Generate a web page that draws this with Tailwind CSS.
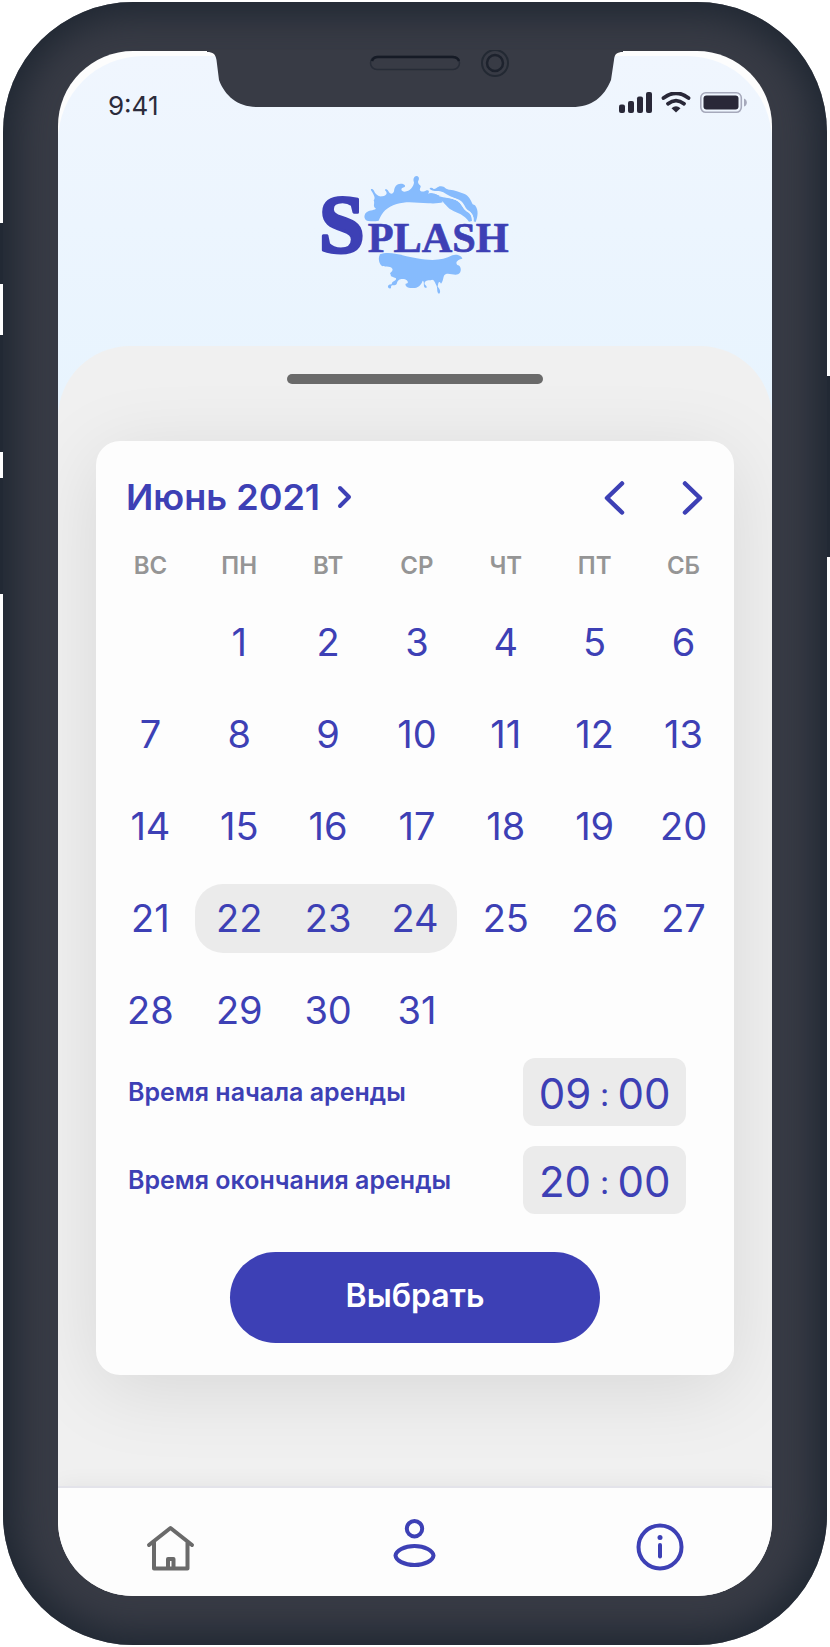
<!DOCTYPE html>
<html lang="ru">
<head>
<meta charset="utf-8">
<meta name="viewport" content="width=device-width, initial-scale=1">
<title>Splash</title>
<script src="https://cdn.jsdelivr.net/npm/@tailwindcss/browser@4"></script>
</head>
<body class="bg-white font-['Inter','Liberation_Sans',sans-serif] text-[#3d40b5]">
<div class="relative px-[3px] py-[2px]">
  <!-- side keys -->
  <div class="absolute left-0 top-[223px] h-[61px] w-1 bg-[#222934]"></div>
  <div class="absolute left-0 top-[335px] h-[117px] w-1 bg-[#222934]"></div>
  <div class="absolute left-0 top-[478px] h-[116px] w-1 bg-[#222934]"></div>
  <div class="absolute right-0 top-[376px] h-[181px] w-1 bg-[#222934]"></div>

  <div class="relative rounded-[130px] bg-[#383b45] px-[55px] py-[49px] shadow-[inset_0_0_36px_12px_#1f2732]">
    <!-- notch -->
    <svg class="absolute left-1/2 top-[48px] z-10 -ml-[208px] h-[60px] w-[416px]" viewBox="207 50 416 60" fill="none" aria-hidden="true">
      <path d="M207 50V52C213 52 215.500 54 216.500 60L219 80C225 96 238 107 257 107H572C592 107 604 97 611 80L614 60C614.500 54 617 52 623 52V50Z" fill="#383b45"/>
      <rect x="370.500" y="56.500" width="89" height="13" rx="6.500" stroke="#272c37" stroke-width="1.500"/>
      <path d="M372 61C373 58 375 57 378 57H452C455 57 458 58 459 61" stroke="#161b26" stroke-width="2.500"/>
      <circle cx="495" cy="63" r="13" stroke="#232933" stroke-width="2"/>
      <circle cx="495" cy="63" r="8" stroke="#1d222d" stroke-width="2.500"/>
    </svg>

    <main class="overflow-hidden rounded-[75px] bg-[#fdfdfd] pt-[5px]">
      <div class="rounded-t-[85px] bg-linear-to-b from-[#f0f6fe] to-[#e8f4fe] to-[340px]">
        <header class="flex flex-col pt-[31px]">
          <div class="flex h-8 items-center justify-between pl-[50px] pr-[24px] text-[#2b2b3b]">
            <span class="pt-1 text-[26px]">9:41</span>
            <svg class="h-[22px] w-[129px]" viewBox="619 92 129 22" fill="#292838" aria-hidden="true">
              <rect x="619" y="104.500" width="6" height="8.500" rx="2"/><rect x="628" y="101" width="6" height="12" rx="2"/><rect x="637" y="96.500" width="6" height="16.500" rx="2"/><rect x="646" y="92" width="6" height="21" rx="2"/>
              <path d="M663.500 98Q676 88.500 688.500 98M668 103.700Q676 97.500 684 103.700" fill="none" stroke="#292838" stroke-width="3.800" stroke-linecap="round"/>
              <path d="M671.500 108.200Q676 104.500 680.500 108.200L676 112.500Z"/>
              <rect x="700.800" y="92.800" width="40.500" height="19.500" rx="5" fill="none" stroke="#a6a9bb" stroke-width="1.600"/>
              <rect x="703.500" y="95.500" width="35" height="14" rx="3"/>
              <path d="M744 98.500Q746.800 99.500 746.800 102.500T744 106.500Z" fill="#a6a9bb"/>
            </svg>
          </div>
          <svg class="mx-auto mt-[41px] mb-[36px] h-[150px] w-[230px]" viewBox="0 0 690 450" role="img" aria-label="Splash">
            <g fill="#86bbfd">
              <path d="M206 183C192 182 190 166 198 158C206 150 220 152 228 146C216 140 226 130 221 121C229 114 218 99 213 91C211 85 218 86 221 91C227 105 236 111 247 109C260 107 264 100 255 91C254 86 262 87 265 93C270 104 279 104 282 94C283 80 290 71 302 71C316 71 318 79 312 82C300 84 303 95 314 95C330 95 341 80 342 67C338 58 342 48 350 48C360 50 357 59 354 65C354 75 366 75 361 83C356 93 365 98 377 92C386 88 390 94 384 101C400 94 424 109 428 127C420 130 404 131 385 130C350 128 320 122 290 132C260 141 246 157 236 182C225 184 216 184 206 183Z"/>
              <path d="M389 87C390 82 397 83 401 87C410 88 413 78 423 79C436 80 436 88 447 89C462 88 477 97 492 101C506 107 512 119 518 133L525 136C537 151 533 171 527 186L520 184C523 168 515 158 501 149C493 138 491 126 477 119C458 113 442 105 430 97C417 89 404 96 394 90Z"/>
              <path d="M402 101C425 110 455 112 475 124C487 134 487 146 501 155C513 161 515 170 516 183L507 185C492 163 473 160 455 150C437 139 429 122 416 113Z"/>
              <path d="M240 283C270 272 310 288 350 295C400 304 430 300 457 286C470 281 486 288 487 296C475 298 464 306 472 315C486 317 485 338 474 343C462 347 448 338 438 342C427 346 433 360 423 371C415 360 415 370 413 380C423 389 421 401 417 401C410 399 413 387 410 378C404 366 401 355 392 361C382 361 372 362 374 373C384 382 380 385 375 383C368 378 375 365 368 362C364 377 350 386 336 384C323 385 314 377 317 371C329 370 323 359 312 357C301 356 293 358 290 372C282 381 276 371 273 380C275 389 262 386 264 378C268 370 275 377 276 368C282 361 289 363 288 355C279 350 271 352 272 343C265 338 281 336 277 326C270 316 251 324 243 316C236 306 234 293 240 283Z"/>
              <path d="M418 107C445 114 458 112 473 121C490 131 486 143 502 152C515 159 520 170 519 185" fill="none" stroke="#edf5fd" stroke-width="4"/>
            </g>
            <g fill="#3d40b5" stroke="#3d40b5" stroke-linejoin="round" class="font-['Liberation_Serif',serif] font-bold">
              <text x="57" y="275" font-size="246" stroke-width="9">S</text>
              <text x="203" y="276" font-size="127" stroke-width="2">PLASH</text>
            </g>
          </svg>
        </header>

        <section class="rounded-t-[72px] bg-[#f0f0f0] px-[38px] pb-[111px] pt-[28px]">
          <div class="mx-auto h-[10px] w-64 rounded-full bg-[#6a6a6a]"></div>
          <div class="mt-[57px] rounded-3xl bg-[#fdfdfd] pb-8 pt-[30px] shadow-[0_14px_80px_rgba(0,0,0,0.1)]">
            <div class="flex h-[52px] items-center pl-[30px] pr-6">
              <button type="button" class="flex items-center gap-[17px] text-[36px] font-semibold">Июнь 2021
                <svg class="h-6 w-4" viewBox="0 0 16 24" fill="none" stroke="currentColor" stroke-width="4" stroke-linecap="round" stroke-linejoin="round" aria-hidden="true"><path d="M3 3L12 12L3 21"/></svg>
              </button>
              <div class="ml-auto flex gap-[42px]">
                <button type="button" aria-label="Предыдущий месяц"><svg class="size-9" viewBox="0 0 36 36" fill="none" stroke="currentColor" stroke-width="4.500" stroke-linecap="round" stroke-linejoin="round"><path d="M26 4.500L11 19L26 33.500"/></svg></button>
                <button type="button" aria-label="Следующий месяц"><svg class="size-9" viewBox="0 0 36 36" fill="none" stroke="currentColor" stroke-width="4.500" stroke-linecap="round" stroke-linejoin="round"><path d="M11 4.500L26 19L11 33.500"/></svg></button>
              </div>
            </div>
            <div class="mt-[13px] pl-[10px] pr-[6px]">
              <table class="w-full table-fixed text-center text-[38px] leading-[69px]">
                <thead>
                  <tr class="h-[60px] text-2xl text-[#959595]">
                    <th class="font-semibold">ВС</th><th class="font-semibold">ПН</th><th class="font-semibold">ВТ</th><th class="font-semibold">СР</th><th class="font-semibold">ЧТ</th><th class="font-semibold">ПТ</th><th class="font-semibold">СБ</th>
                  </tr>
                </thead>
                <tbody>
                  <tr class="h-[92px]"><td></td><td>1</td><td>2</td><td>3</td><td>4</td><td>5</td><td>6</td></tr>
                  <tr class="h-[92px]"><td>7</td><td>8</td><td>9</td><td>10</td><td>11</td><td>12</td><td>13</td></tr>
                  <tr class="h-[92px]"><td>14</td><td>15</td><td>16</td><td>17</td><td>18</td><td>19</td><td>20</td></tr>
                  <tr class="h-[92px]"><td>21</td><td><div class="rounded-l-[28px] bg-[#ebebeb]">22</div></td><td><div class="bg-[#ebebeb]">23</div></td><td class="pr-1"><div class="rounded-r-[28px] bg-[#ebebeb]">24</div></td><td>25</td><td>26</td><td>27</td></tr>
                  <tr class="h-[92px]"><td>28</td><td>29</td><td>30</td><td>31</td><td></td><td></td><td></td></tr>
                </tbody>
              </table>
            </div>
            <form class="flex flex-col gap-5 pt-[2px]">
              <div class="flex items-center justify-between pl-8 pr-12">
                <label for="start-h" class="pt-[2px] text-[25px] font-semibold">Время начала аренды</label>
                <div class="flex h-[68px] w-[163px] items-center rounded-xl bg-[#ebebeb] px-3 pt-[2px] text-[42px]">
                  <input id="start-h" value="09" inputmode="numeric" class="w-[60px] text-center">
                  <span class="w-5 pt-1 text-center text-[32px]">:</span>
                  <input aria-label="Минуты начала" value="00" inputmode="numeric" class="w-[60px] text-center">
                </div>
              </div>
              <div class="flex items-center justify-between pl-8 pr-12">
                <label for="end-h" class="pt-[2px] text-[25px] font-semibold">Время окончания аренды</label>
                <div class="flex h-[68px] w-[163px] items-center rounded-xl bg-[#ebebeb] px-3 pt-[2px] text-[42px]">
                  <input id="end-h" value="20" inputmode="numeric" class="w-[60px] text-center">
                  <span class="w-5 pt-1 text-center text-[32px]">:</span>
                  <input aria-label="Минуты окончания" value="00" inputmode="numeric" class="w-[60px] text-center">
                </div>
              </div>
              <button type="button" class="mx-auto mt-[18px] h-[91px] w-[370px] rounded-full bg-[#3d40b5] pb-1 text-[32px] font-semibold text-white">Выбрать</button>
            </form>
          </div>
        </section>
      </div>

      <nav class="relative flex h-[110px] items-start justify-between border-t-2 border-[#e3e3ea] bg-[#fdfdfd] px-[82px] pt-[29px] shadow-[0_0_22px_rgba(0,0,0,0.06)]">
        <a href="#home" aria-label="Главная" class="text-[#6a6a6a]"><svg class="size-[60px]" viewBox="0 0 60 60" fill="none" stroke="currentColor" stroke-width="4" stroke-linecap="round" stroke-linejoin="round"><path d="M9 28L30.500 11L52 28M14 25V51.500H47.500V25M28 51V42H33.500V51"/></svg></a>
        <a href="#profile" aria-label="Профиль"><svg class="size-[60px]" viewBox="0 0 60 60" fill="none" stroke="currentColor" stroke-width="4"><circle cx="29.500" cy="11.700" r="7.700"/><path d="M10.500 38.500C11 34 19 29 29.500 29S48 34 48.500 38.500C48 43.500 40 48 29.500 48S11 43.500 10.500 38.500Z"/></svg></a>
        <a href="#info" aria-label="Информация"><svg class="size-[60px]" viewBox="0 0 60 60" fill="none" stroke="currentColor" stroke-width="4"><circle cx="30" cy="30" r="21.500"/><circle cx="30" cy="20.500" r="2.500" fill="currentColor" stroke="none"/><path d="M30 28V39.500" stroke-linecap="round"/></svg></a>
      </nav>
    </main>
  </div>
</div>
</body>
</html>
